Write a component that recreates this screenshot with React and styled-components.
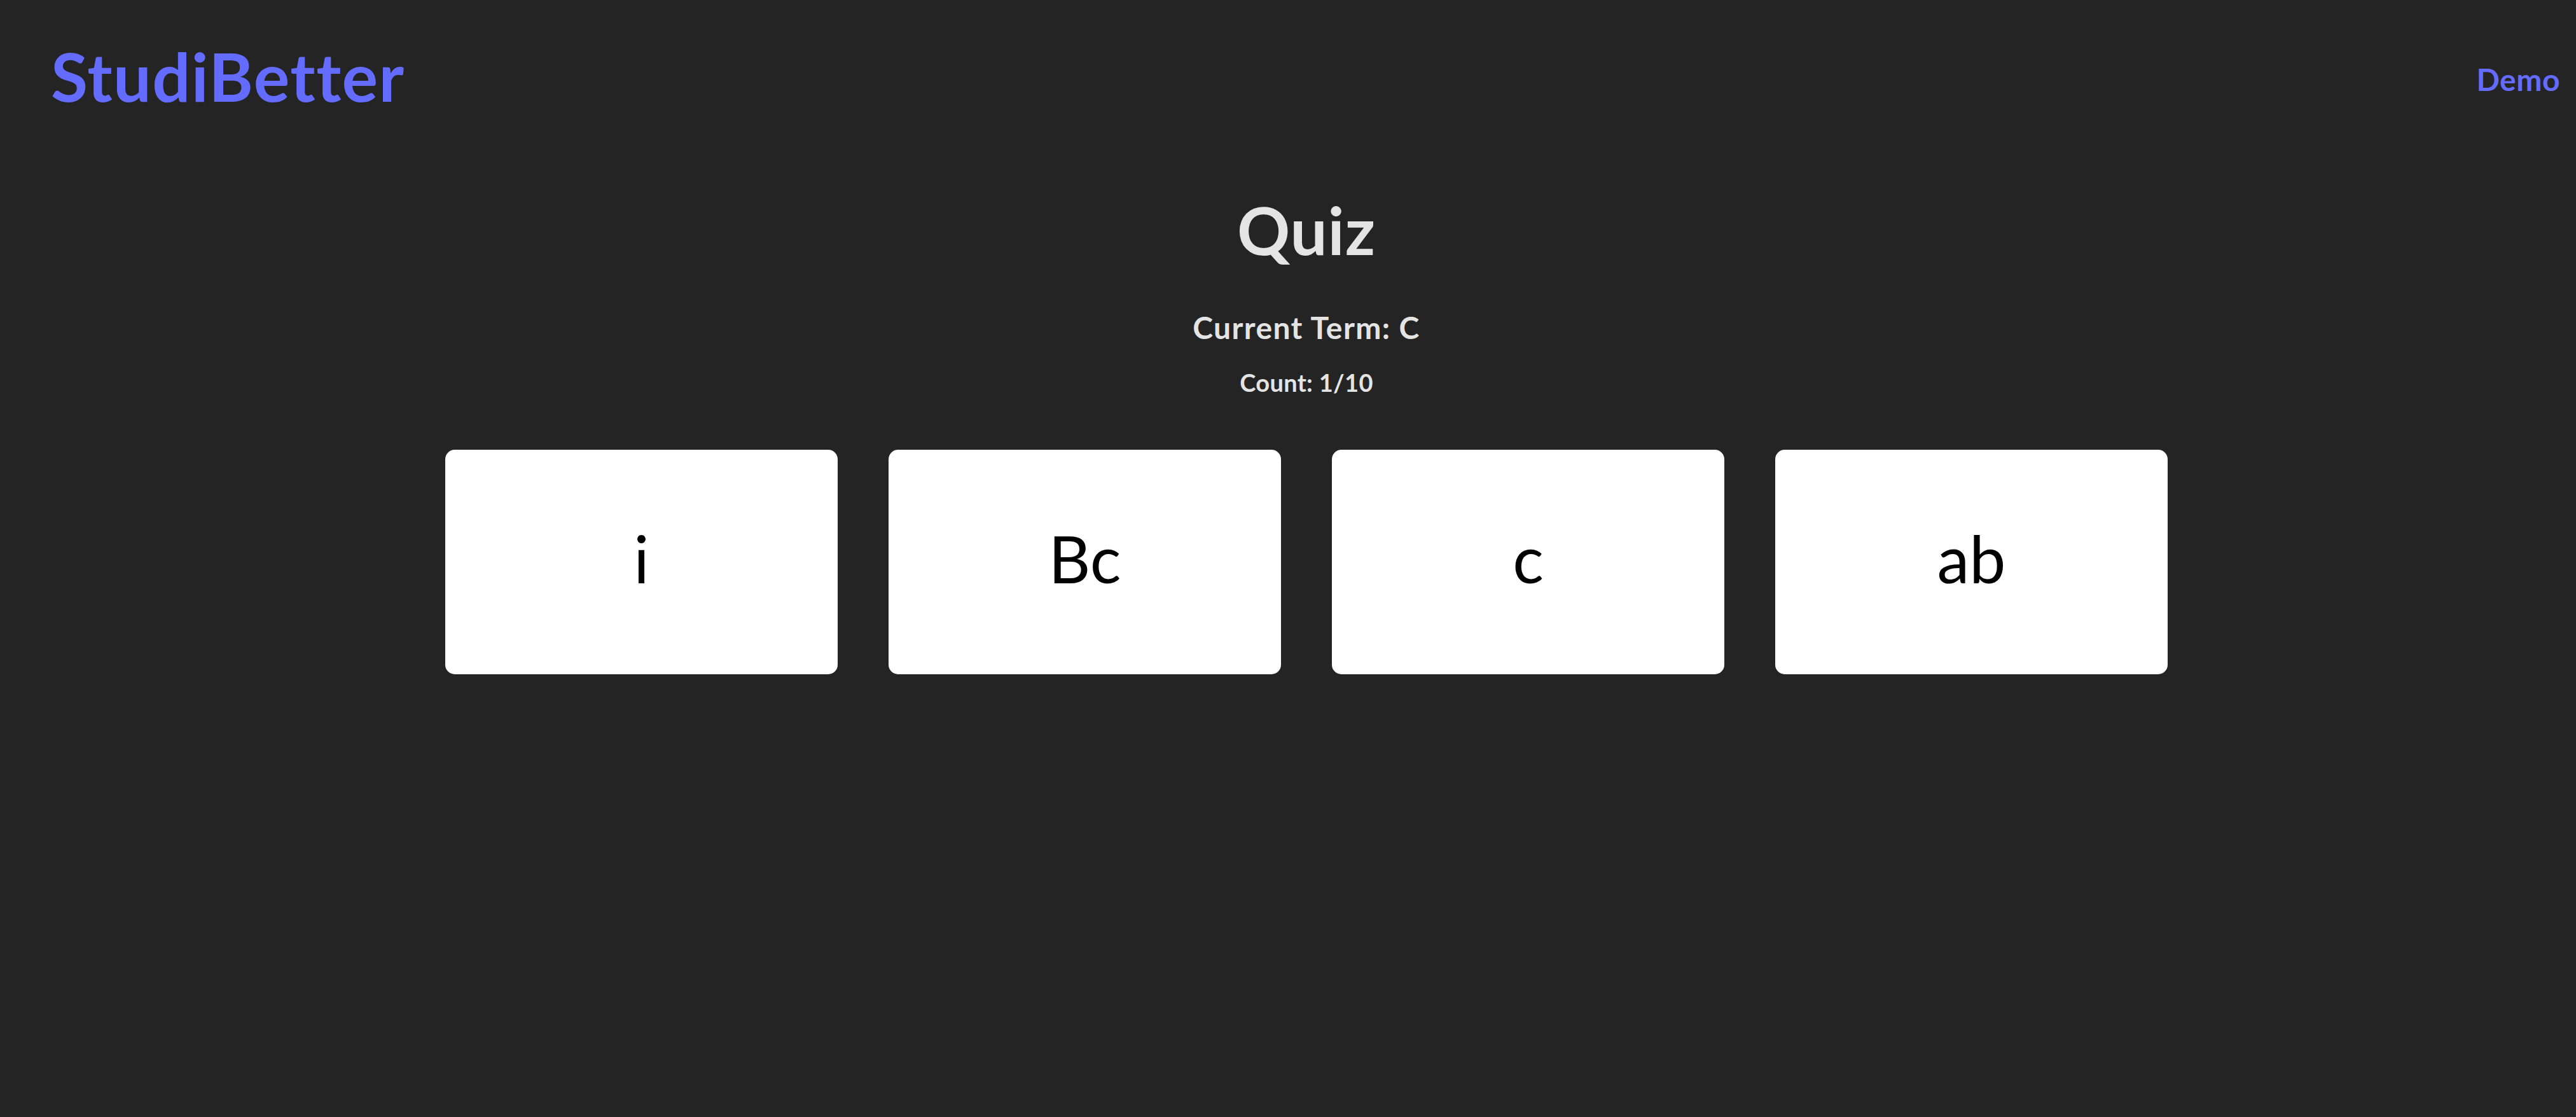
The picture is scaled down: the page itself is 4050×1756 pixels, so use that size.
import React from "react";
import styled, { createGlobalStyle } from "styled-components";

const GlobalStyle = createGlobalStyle`
  html, body {
    margin: 0;
    padding: 0;
    background-color: #242424;
  }
  body {
    font-family: "Lato", "Noto Sans", sans-serif;
    color: rgba(255, 255, 255, 0.87);
    min-height: 100vh;
  }
`;

const Page = styled.div`
  min-height: 1756px;
  background-color: #242424;
`;

const Header = styled.header`
  display: flex;
  justify-content: space-between;
  align-items: flex-start;
  padding: 56px 25px 0 80px;
`;

const Logo = styled.a`
  font-size: 106px;
  font-weight: 700;
  line-height: 1.2;
  letter-spacing: 1.4px;
  color: #646cff;
  text-decoration: none;
`;

const NavLink = styled.a`
  margin-top: 40px;
  font-size: 48px;
  font-weight: 700;
  line-height: 1.2;
  letter-spacing: 0.5px;
  color: #646cff;
  text-decoration: none;
`;

const Main = styled.main`
  display: flex;
  flex-direction: column;
  align-items: center;
  padding-left: 58px;
  margin-top: 117px;
`;

const Title = styled.h1`
  margin: 0;
  font-size: 103px;
  font-weight: 700;
  line-height: 1.2;
  letter-spacing: 1px;
  color: #e4e4e4;
`;

const Term = styled.h3`
  margin: 62px 0 0;
  font-size: 48px;
  font-weight: 700;
  line-height: 1.2;
  letter-spacing: 1.4px;
  color: #e4e4e4;
`;

const Count = styled.p`
  margin: 36px 0 0;
  font-size: 38px;
  font-weight: 700;
  line-height: 1.2;
  letter-spacing: 0.3px;
  color: #e4e4e4;
`;

const Choices = styled.div`
  display: grid;
  grid-template-columns: repeat(4, 617px);
  gap: 80px;
  margin-top: 82px;
`;

const Choice = styled.button`
  height: 353px;
  border: none;
  border-radius: 15px;
  background-color: #ffffff;
  color: #000000;
  font-family: "Lato", "Noto Sans", sans-serif;
  font-size: 102px;
  font-weight: 400;
  line-height: 1.2;
  display: flex;
  align-items: center;
  justify-content: center;
  padding: 0 0 10px;
  cursor: pointer;
`;

const answers = ["i", "Bc", "c", "ab"];

export default function App() {
  return (
    <>
      <GlobalStyle />
      <Page>
        <Header>
          <Logo href="#">StudiBetter</Logo>
          <NavLink href="#">Demo</NavLink>
        </Header>
        <Main>
          <Title>Quiz</Title>
          <Term>Current Term: C</Term>
          <Count>Count: 1/10</Count>
          <Choices>
            {answers.map((a) => (
              <Choice key={a}>{a}</Choice>
            ))}
          </Choices>
        </Main>
      </Page>
    </>
  );
}
